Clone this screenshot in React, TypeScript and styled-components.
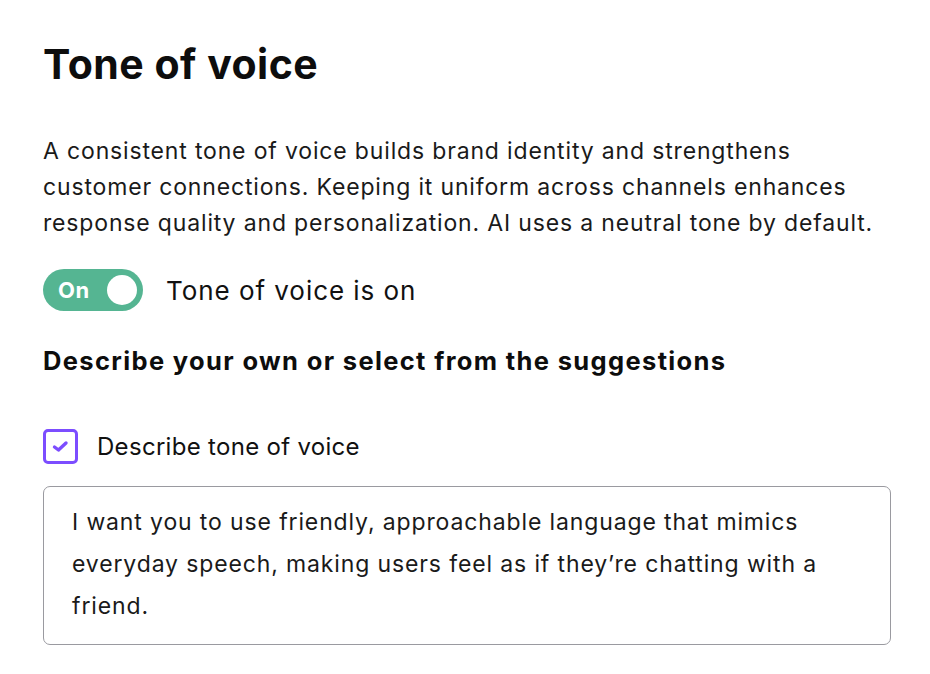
import React from "react";
import styled, { createGlobalStyle } from "styled-components";

const Global = createGlobalStyle`
  html, body { margin: 0; padding: 0; background: #ffffff; }
  body { font-family: Inter, "Noto Sans", sans-serif; color: #111111; }
`;

const Page = styled.main`
  box-sizing: border-box;
  width: 930px;
  padding: 38px 40px 0 43px;
  display: flex;
  flex-direction: column;
`;

const Title = styled.h1`
  margin: 0;
  font-size: 41px;
  line-height: 52px;
  font-weight: 700;
  letter-spacing: 0.5px;
  color: #0d0d0d;
`;

const Lead = styled.p`
  margin: 43px 0 0;
  font-size: 23px;
  line-height: 36px;
  letter-spacing: 0.84px;
  color: #1a1a1a;
  max-width: 847px;
`;

const ToggleRow = styled.div`
  display: flex;
  align-items: center;
  gap: 23px;
  margin-top: 28px;
`;

const Switch = styled.button`
  box-sizing: border-box;
  width: 100px;
  height: 42px;
  border: none;
  border-radius: 21px;
  background: #55b592;
  display: flex;
  align-items: center;
  justify-content: space-between;
  padding: 0 6px 0 15px;
  cursor: pointer;
`;

const SwitchText = styled.span`
  font-family: Inter, sans-serif;
  font-size: 22px;
  font-weight: 700;
  letter-spacing: 0.6px;
  color: #ffffff;
`;

const Knob = styled.span`
  width: 30px;
  height: 30px;
  border-radius: 50%;
  background: #ffffff;
`;

const ToggleLabel = styled.span`
  font-size: 26px;
  letter-spacing: 0.95px;
  color: #111111;
`;

const Subheading = styled.h2`
  margin: 34px 0 0;
  font-size: 25.5px;
  line-height: 32px;
  font-weight: 700;
  letter-spacing: 1.35px;
  color: #0d0d0d;
`;

const CheckRow = styled.label`
  display: flex;
  align-items: center;
  gap: 19px;
  margin-top: 52px;
`;

const Box = styled.span`
  box-sizing: border-box;
  width: 35px;
  height: 35px;
  border: 3px solid #7c4dff;
  border-radius: 5px;
  display: flex;
  align-items: center;
  justify-content: center;
`;

const CheckLabel = styled.span`
  font-size: 24px;
  letter-spacing: 0.3px;
  color: #111111;
`;

const TextBox = styled.div`
  box-sizing: border-box;
  margin-top: 22px;
  width: 848px;
  height: 159px;
  border: 1px solid #9a9aa0;
  border-radius: 7px;
  padding: 14px 28px;
  font-size: 23px;
  line-height: 42px;
  letter-spacing: 0.87px;
  color: #1a1a1a;
`;

export default function App() {
  return (
    <>
      <Global />
      <Page>
        <Title>Tone of voice</Title>
        <Lead>
          A consistent tone of voice builds brand identity and strengthens
          customer connections. Keeping it uniform across channels enhances
          response quality and personalization. AI uses a neutral tone by default.
        </Lead>
        <ToggleRow>
          <Switch aria-pressed="true">
            <SwitchText>On</SwitchText>
            <Knob />
          </Switch>
          <ToggleLabel>Tone of voice is on</ToggleLabel>
        </ToggleRow>
        <Subheading>Describe your own or select from the suggestions</Subheading>
        <CheckRow>
          <Box>
            <svg width="17" height="13" viewBox="0 0 17 13" fill="none">
              <path d="M2.5 7 L6.5 10 L14 3" stroke="#7c4dff" strokeWidth="3.4" strokeLinecap="round" strokeLinejoin="round" />
            </svg>
          </Box>
          <CheckLabel>Describe tone of voice</CheckLabel>
        </CheckRow>
        <TextBox>
          I want you to use friendly, approachable language that mimics everyday
          speech, making users feel as if they’re chatting with a friend.
        </TextBox>
      </Page>
    </>
  );
}
